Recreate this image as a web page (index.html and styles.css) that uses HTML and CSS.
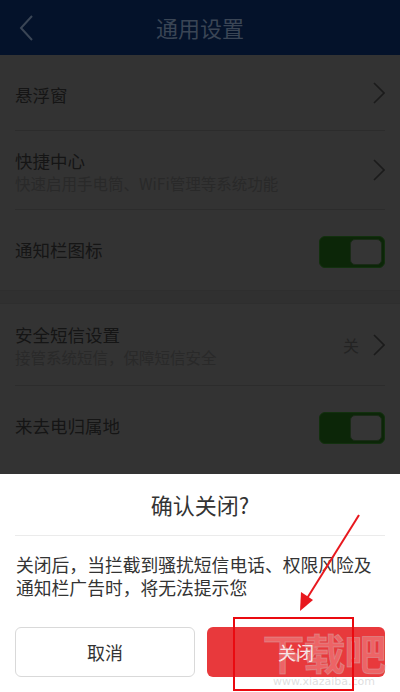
FILE: index.html
```html
<!DOCTYPE html>
<html lang="zh-CN">
<head>
<meta charset="utf-8">
<title>通用设置</title>
<link rel="stylesheet" href="styles.css">
</head>
<body>
<div class="app">
  <header class="topbar">
    <svg class="back" width="16" height="28" viewBox="0 0 16 28"><path d="M13 2 L2 14 L13 26" fill="none" stroke="#3a4555" stroke-width="2"/></svg>
    <div class="title">通用设置</div>
  </header>

  <main class="list">
    <div class="row r1">
      <div class="texts"><div class="t">悬浮窗</div></div>
      <svg class="chev" width="12" height="22" viewBox="0 0 12 22"><path d="M1 1 L11 11 L1 21" fill="none" stroke="#1b1b1b" stroke-width="1.6"/></svg>
    </div>
    <div class="row r2">
      <div class="texts"><div class="t">快捷中心</div><div class="s">快速启用手电筒、WiFi管理等系统功能</div></div>
      <svg class="chev" width="12" height="22" viewBox="0 0 12 22"><path d="M1 1 L11 11 L1 21" fill="none" stroke="#1b1b1b" stroke-width="1.6"/></svg>
    </div>
    <div class="row r3 last">
      <div class="texts"><div class="t">通知栏图标</div></div>
      <div class="toggle"><div class="knob"></div></div>
    </div>
    <div class="gap"></div>
    <div class="row r4">
      <div class="texts"><div class="t">安全短信设置</div><div class="s">接管系统短信，保障短信安全</div></div>
      <span class="val">关</span>
      <svg class="chev" width="12" height="22" viewBox="0 0 12 22"><path d="M1 1 L11 11 L1 21" fill="none" stroke="#1b1b1b" stroke-width="1.6"/></svg>
    </div>
    <div class="row r5 last">
      <div class="texts"><div class="t">来去电归属地</div></div>
      <div class="toggle"><div class="knob"></div></div>
    </div>
  </main>

  <section class="sheet">
    <h2 class="stitle">确认关闭?</h2>
    <p class="msg">关闭后，当拦截到骚扰短信电话、权限风险及通知栏广告时，将无法提示您</p>
    <div class="btns">
      <button class="btn cancel">取消</button>
      <button class="btn ok">关闭</button>
    </div>
  </section>

  <div class="wm"><div class="wm-big">下载吧</div><div class="wm-url">www.xiazaiba.com</div></div>
  <div class="mark"></div>
  <svg class="arrow" width="400" height="692" viewBox="0 0 400 692">
    <path d="M359 515 L306 600" stroke="#e8181e" stroke-width="2" fill="none"/>
    <path d="M300 611 L301 592 L313 600 Z" fill="#e8181e"/>
  </svg>
</div>
</body>
</html>
```

FILE: styles.css
```css
* { box-sizing: border-box; }
html, body { margin: 0; padding: 0; }
body {
  width: 400px;
  height: 692px;
  overflow: hidden;
  background: #333333;
  font-family: "Noto Sans CJK SC", "Noto Sans", sans-serif;
}
.app {
  position: relative;
  width: 400px;
  height: 692px;
  overflow: hidden;
  background: #333333;
}
.topbar {
  height: 55px;
  background: #04122a;
  display: flex;
  align-items: center;
  justify-content: center;
  position: relative;
}
.back {
  position: absolute;
  left: 19px;
  top: 14px;
}
.title {
  color: #3a4555;
  font-size: 22px;
  line-height: 1;
  margin-top: -2px;
}
.list {
  display: flex;
  flex-direction: column;
}
.row {
  display: flex;
  align-items: center;
  margin: 0 15px;
  border-bottom: 1px solid #2c2c2c;
}
.row.last { border-bottom: none; }
.r1 { height: 76px; }
.r1 .texts { padding-top: 4px; }
.r2 { height: 79px; }
.r3 { height: 80px; }
.r4 { height: 82px; }
.r5 { height: 80px; }
.texts {
  flex: 1;
  display: flex;
  flex-direction: column;
}
.t {
  color: #151515;
  font-size: 17.5px;
  line-height: 22px;
}
.s {
  color: #292929;
  font-size: 15.5px;
  line-height: 20px;
  margin-top: 1px;
}
.r2 .texts, .r4 .texts { padding-top: 2px; }
.chev { margin-right: 0; flex: none; }
.val {
  color: #232323;
  font-size: 16px;
  margin-right: 14px;
}
.toggle {
  width: 66px;
  height: 32px;
  border-radius: 6px;
  background: #0c2608;
  border: 1px solid #12300e;
  padding: 2px;
  display: flex;
  justify-content: flex-end;
  margin-top: 4px;
}
.knob {
  width: 32px;
  height: 26px;
  border-radius: 5px;
  background: #353535;
  border: 1px solid #1a2a17;
}
.gap {
  height: 14px;
  background: #303030;
  border-top: 1px solid #2e2e2e;
  border-bottom: 1px solid #2e2e2e;
}
.sheet {
  position: absolute;
  left: 0;
  right: 0;
  top: 474px;
  bottom: 0;
  background: #ffffff;
  padding: 0 15px;
  display: flex;
  flex-direction: column;
}
.stitle {
  margin: 0;
  height: 62px;
  display: flex;
  align-items: center;
  justify-content: center;
  font-weight: normal;
  font-size: 22px;
  color: #333333;
  border-bottom: 1px solid #ebebeb;
  padding-bottom: 2px;
}
.msg {
  margin: 17px 0 0 1px;
  font-size: 17.8px;
  line-height: 23px;
  color: #333333;
}
.btns {
  display: flex;
  gap: 12px;
  margin-top: 28px;
}
.btn {
  flex: 1;
  height: 50px;
  border-radius: 6px;
  font-family: "Noto Sans CJK SC", "Noto Sans", sans-serif;
  font-size: 18px;
  cursor: pointer;
}
.cancel {
  background: #ffffff;
  border: 1px solid #d9d9d9;
  color: #333333;
}
.ok {
  background: #e8393c;
  border: none;
  color: #fbe4e4;
}
.wm {
  position: absolute;
  left: 258px;
  top: 628px;
  width: 132px;
  text-align: center;
  pointer-events: none;
}
.wm-big {
  font-size: 42px;
  line-height: 48px;
  letter-spacing: -1px;
  color: rgba(255, 255, 255, 0.22);
  -webkit-text-stroke: 1px rgba(200, 200, 200, 0.35);
  font-weight: bold;
}
.wm-url {
  font-family: "DejaVu Sans", sans-serif;
  font-size: 11px;
  line-height: 12px;
  color: rgba(190, 190, 190, 0.5);
}
.mark {
  position: absolute;
  left: 233px;
  top: 617px;
  width: 121px;
  height: 74px;
  border: 2.5px solid #ea0a10;
}
.arrow {
  position: absolute;
  left: 0;
  top: 0;
  pointer-events: none;
}
```
